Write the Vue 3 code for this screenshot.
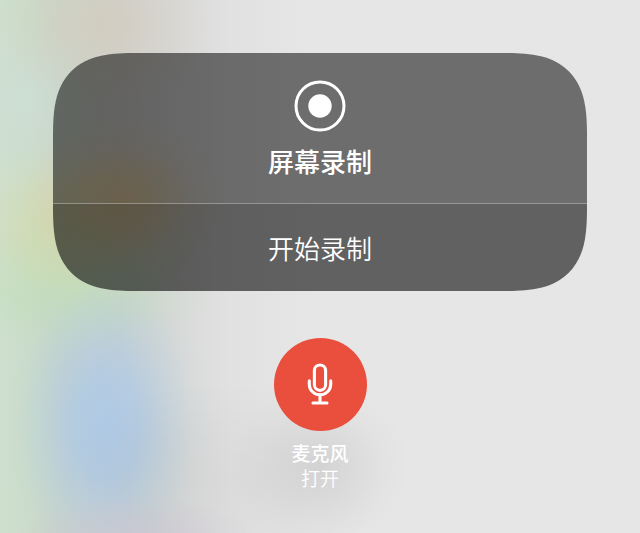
<script setup>
import { ref, computed } from 'vue'

const recording = ref(false)
const micOn = ref(true)

const recordLabel = computed(() => (recording.value ? '停止录制' : '开始录制'))
const micState = computed(() => (micOn.value ? '打开' : '关闭'))
</script>

<template>
  <main class="control-center">
    <section class="panel">
      <header class="panel-header">
        <svg class="record-icon" viewBox="0 0 52 52" aria-hidden="true">
          <circle cx="26" cy="26" r="24" fill="none" stroke="#fff" stroke-width="3" />
          <circle cx="26" cy="26" r="11.7" fill="#fff" />
        </svg>
        <h1 class="title">屏幕录制</h1>
      </header>
      <button class="record-button" type="button" @click="recording = !recording">
        {{ recordLabel }}
      </button>
    </section>

    <div class="mic">
      <button
        class="mic-button"
        :class="{ off: !micOn }"
        type="button"
        aria-labelledby="mic-label"
        @click="micOn = !micOn"
      >
        <svg class="mic-icon" viewBox="0 0 26 44" aria-hidden="true">
          <g fill="none" stroke="#fff" stroke-width="3.1" stroke-linecap="round" stroke-linejoin="round">
            <rect x="7.4" y="2" width="11.2" height="25.4" rx="5.6" />
            <path d="M2.3 17.8v3.4a10.7 10.7 0 0 0 21.4 0v-3.4" />
            <path d="M13 32v8M6 40h14" />
          </g>
        </svg>
      </button>
      <div class="mic-label" id="mic-label">
        <span class="mic-name">麦克风</span>
        <span class="mic-state">{{ micState }}</span>
      </div>
    </div>
  </main>
</template>

<style>
body { margin: 0; }
</style>

<style scoped>
.control-center {
  box-sizing: border-box;
  min-height: 100vh;
  padding: 53px 53px 40px;
  display: flex;
  flex-direction: column;
  font-family: "Liberation Sans", "Noto Sans CJK SC", sans-serif;
  color: #fff;
  /* rozmazaná plocha pod ovládacím centrem */
  background:
    radial-gradient(ellipse 90px 85px at 50% 466px, rgba(0, 0, 0, 0.07), rgba(0, 0, 0, 0.045) 35%, rgba(0, 0, 0, 0.015) 70%, transparent),
    radial-gradient(ellipse 170px 100px at 220px 480px, rgba(0, 0, 0, 0.03), rgba(0, 0, 0, 0.02) 50%, transparent),
    radial-gradient(ellipse 120px 45px at 135px 540px, rgba(203, 196, 212, 0.65), rgba(203, 196, 212, 0.3) 50%, transparent),
    radial-gradient(ellipse 108px 175px at 106px 425px, rgba(174, 202, 231, 0.95), rgba(174, 202, 229, 0.8) 30%, rgba(178, 206, 222, 0.4) 60%, rgba(186, 212, 214, 0.12) 82%, transparent),
    radial-gradient(ellipse 100px 80px at 122px 198px, rgba(232, 200, 150, 0.75), rgba(228, 202, 155, 0.5) 35%, rgba(225, 206, 165, 0.18) 70%, transparent),
    radial-gradient(ellipse 130px 85px at 75px 225px, rgba(211, 216, 155, 0.6), rgba(213, 218, 165, 0.42) 40%, rgba(213, 222, 180, 0.15) 75%, transparent),
    radial-gradient(ellipse 145px 85px at 75px 285px, rgba(193, 222, 180, 0.8), rgba(193, 222, 185, 0.5) 40%, rgba(198, 222, 195, 0.15) 75%, transparent),
    radial-gradient(ellipse 110px 80px at 105px 25px, rgba(211, 203, 183, 0.6), rgba(211, 205, 188, 0.35) 45%, transparent),
    radial-gradient(ellipse 60px 80px at 25px 100px, rgba(205, 222, 212, 0.8), rgba(205, 220, 212, 0.4) 50%, transparent),
    linear-gradient(90deg, #cedfce 0, #ccdcca 30px, #cbd4c9 60px, #d1d0ce 120px, #dadada 180px, #e1e1e1 230px, #e6e6e6 310px);
}

.panel {
  overflow: hidden;
  border-radius: 62px;
}
@supports (corner-shape: squircle) {
  .panel { border-radius: 84px; corner-shape: superellipse(1.5); }
}

.panel-header {
  height: 150px;
  display: flex;
  flex-direction: column;
  align-items: center;
  box-sizing: border-box;
  padding-top: 27px;
  background: rgba(0, 0, 0, 0.525);
}
.record-icon { width: 52px; height: 52px; }
.title { margin: 11px 0 0; font-size: 26px; line-height: 40px; font-weight: 500; }

.record-button {
  display: block;
  width: 100%;
  height: 88px;
  padding: 4px 0 0;
  border: 0;
  border-top: 1px solid rgba(255, 255, 255, 0.35);
  background: rgba(0, 0, 0, 0.58);
  color: #fff;
  font-family: inherit;
  font-size: 26px;
  font-weight: 350;
  line-height: 40px;
  cursor: pointer;
}

.mic {
  margin-top: 47px;
  display: flex;
  flex-direction: column;
  align-items: center;
}
.mic-button {
  width: 93px;
  height: 93px;
  padding: 0;
  display: flex;
  align-items: center;
  justify-content: center;
  border: 0;
  border-radius: 50%;
  background: #ea4e3d;
  cursor: pointer;
}
.mic-button.off { background: rgba(0, 0, 0, 0.4); }
.mic-icon { width: 26px; height: 44px; }

.mic-label {
  margin-top: 11px;
  display: flex;
  flex-direction: column;
  align-items: center;
  font-size: 19px;
  line-height: 25px;
}
.mic-name { font-weight: 500; }
.mic-state { font-weight: 350; }
</style>
